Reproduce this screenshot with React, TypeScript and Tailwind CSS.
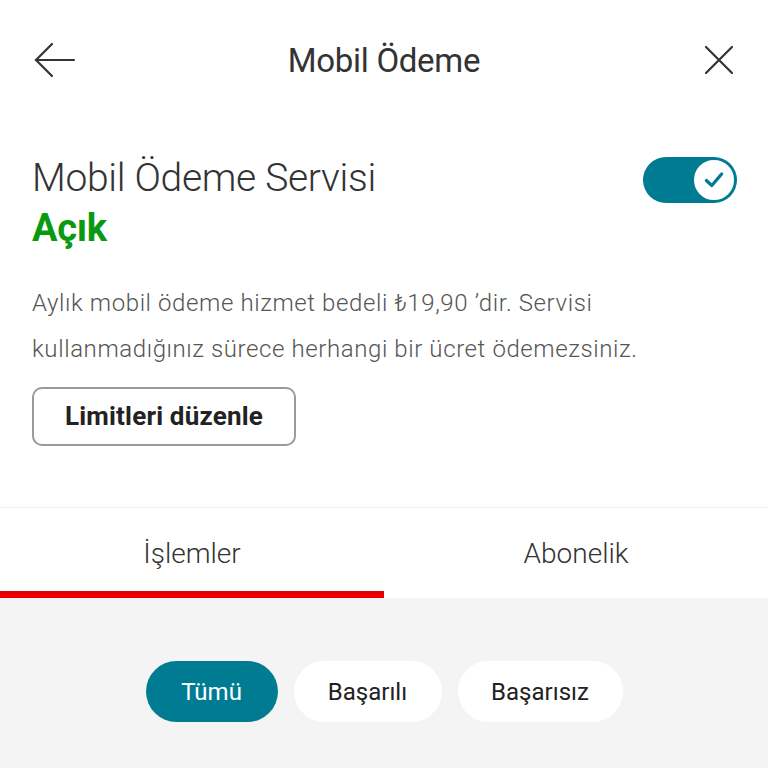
import React from "react";

export default function App() {
  const font = { fontFamily: "Roboto, 'Noto Sans', sans-serif" };
  return (
    <div className="w-[768px] h-[768px] bg-white overflow-hidden flex flex-col text-[#333]" style={font}>
      {/* Header */}
      <div className="h-[122px] flex items-center justify-between px-[34px] pb-[2px]">
        <svg width="42" height="36" viewBox="0 0 42 36" fill="none" stroke="#333" strokeWidth="2.2" strokeLinecap="round">
          <path d="M40 18H2" />
          <path d="M18 2L2 18L18 34" />
        </svg>
        <div className="text-[33px] font-normal tracking-[-0.3px] mr-[12px] mt-[2px]">Mobil Ödeme</div>
        <svg width="30" height="30" viewBox="0 0 30 30" fill="none" stroke="#333" strokeWidth="2.2" strokeLinecap="round">
          <path d="M2 2L28 28M28 2L2 28" />
        </svg>
      </div>

      {/* Service */}
      <div className="px-[32px] flex justify-between items-start pt-[33px]">
        <div className="flex flex-col">
          <div className="text-[39px] font-light leading-[46px] tracking-[-0.3px]">Mobil Ödeme Servisi</div>
          <div className="text-[38px] font-bold leading-[46px] text-[#0a9a12] tracking-[-0.3px] mt-[4px]">Açık</div>
        </div>
        <div className="mt-[2px] mr-[-1px] w-[94px] h-[46px] rounded-full bg-[#007c92] flex items-center justify-end pr-[1px]">
          <div className="w-[44px] h-[44px] rounded-full bg-white flex items-center justify-center border-[2px] border-[#007c92]">
            <svg width="24" height="20" viewBox="0 0 22 18" fill="none" stroke="#007c92" strokeWidth="3" strokeLinecap="round" strokeLinejoin="round">
              <path d="M4 9.5L9 14L18 3.5" />
            </svg>
          </div>
        </div>
      </div>

      <div className="px-[32px] pt-[29px] text-[24px] leading-[46px] text-[#555] font-light tracking-[0.6px]">
        Aylık mobil ödeme hizmet bedeli ₺19,90 ’dir. Servisi
        <br />
        kullanmadığınız sürece herhangi bir ücret ödemezsiniz.
      </div>

      <div className="px-[32px] pt-[15px]">
        <button className="w-[264px] h-[59px] rounded-[10px] border-[2px] border-[#9a9a9a] text-[26px] font-bold text-[#222] tracking-[0.2px] flex items-center justify-center">
          Limitleri düzenle
        </button>
      </div>

      {/* Tabs */}
      <div className="mt-[61px] border-t border-[#eeeeee] flex h-[91px]">
        <div className="flex-1 flex flex-col">
          <div className="flex-1 flex items-center justify-center text-[28px] font-light pt-[8px]">İşlemler</div>
          <div className="h-[7px] bg-[#e60000]" />
        </div>
        <div className="flex-1 flex flex-col">
          <div className="flex-1 flex items-center justify-center text-[28px] font-light pt-[8px]">Abonelik</div>
          <div className="h-[7px]" />
        </div>
      </div>

      {/* Filter area */}
      <div className="flex-1 bg-[#f4f4f4] flex justify-center items-start pt-[63px] gap-[16px]">
        <div className="w-[132px] h-[61px] rounded-full bg-[#007c92] text-white flex items-center justify-center text-[24px]">Tümü</div>
        <div className="w-[148px] h-[61px] rounded-full bg-white flex items-center justify-center text-[24px] text-[#222]">Başarılı</div>
        <div className="w-[165px] h-[61px] rounded-full bg-white flex items-center justify-center text-[24px] text-[#222]">Başarısız</div>
      </div>
    </div>
  );
}
